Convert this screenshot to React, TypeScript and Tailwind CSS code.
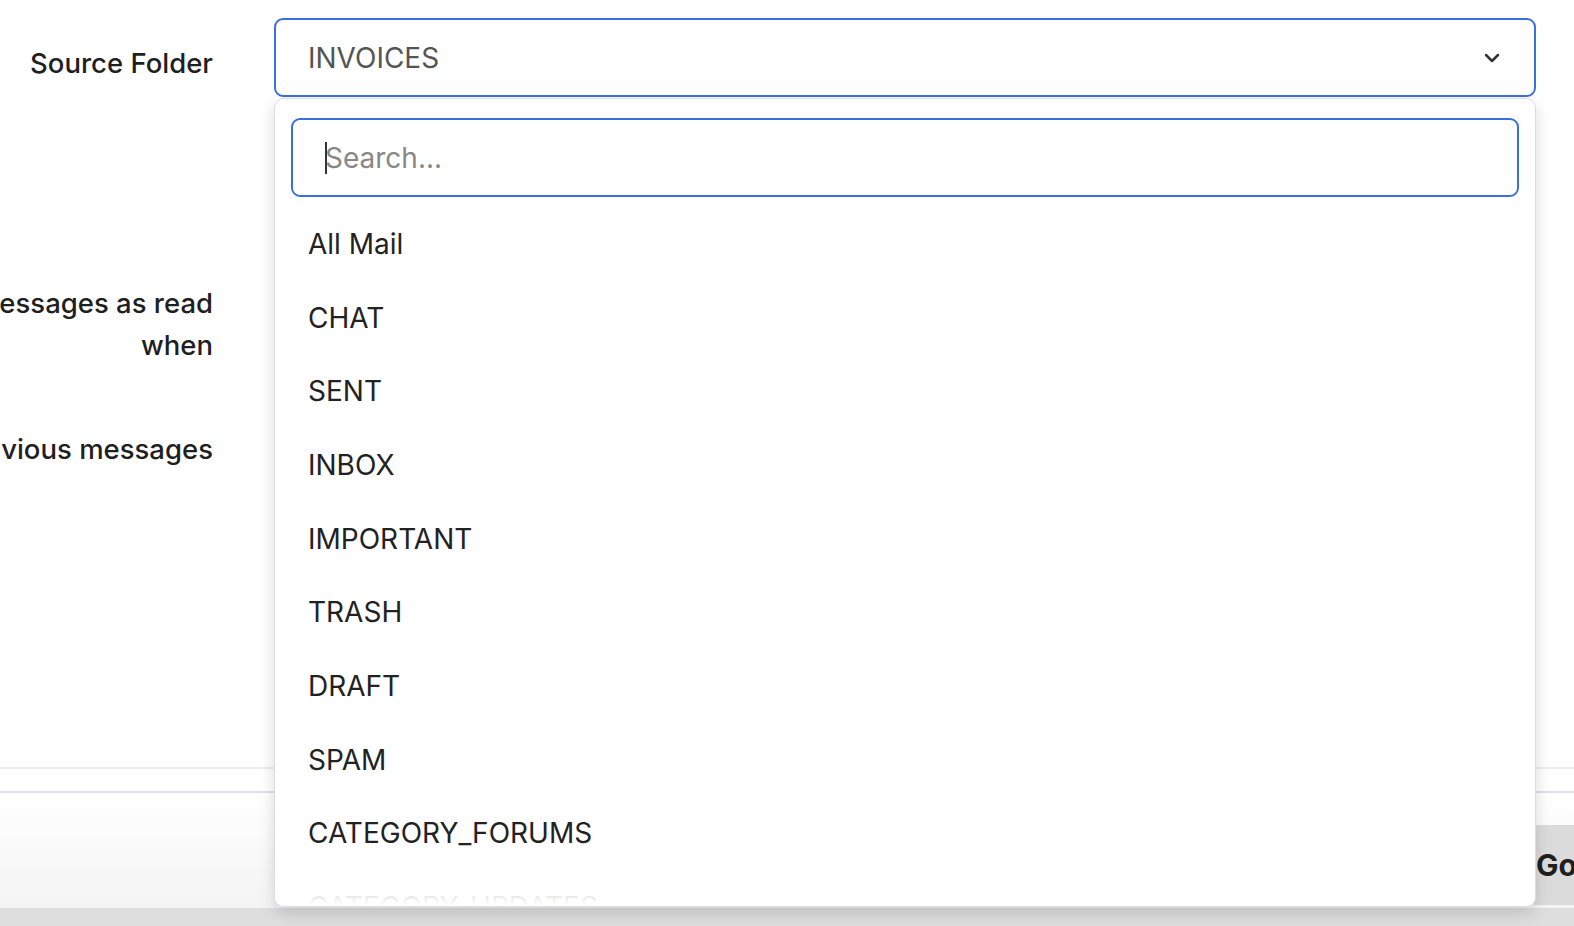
import React from "react";

const items = ["All Mail","CHAT","SENT","INBOX","IMPORTANT","TRASH","DRAFT","SPAM","CATEGORY_FORUMS","CATEGORY_UPDATES"];

export default function App() {
  return (
    <div className="relative w-[1574px] h-[926px] overflow-hidden bg-white text-[#1f1f1f]" style={{fontFamily:"Inter, 'Noto Sans', sans-serif"}}>
      <div className="flex flex-col h-full">
        <div className="flex h-[767px]">
          <div className="w-[213px] shrink-0 flex flex-col items-end text-[27.5px] leading-[42px] font-medium text-right">
            <div className="mt-[42px] whitespace-nowrap">Source Folder</div>
            <div className="mt-[198px] whitespace-nowrap">essages as read</div>
            <div>when</div>
            <div className="mt-[62px] whitespace-nowrap">vious messages</div>
          </div>
        </div>
        <div className="h-[26px] border-t-2 border-[#ececef] border-b-2 border-b-[#e0e0ec]" />
        <div className="flex-1 flex justify-end items-start bg-gradient-to-b from-white to-[#f4f4f4]">
          <div className="mt-[32px] h-[80px] w-[40px] bg-[#dcdbdc] flex items-center text-[30px] font-bold pl-[2px] overflow-hidden whitespace-nowrap">Go</div>
        </div>
        <div className="h-[18px] bg-[#dedede]" />
      </div>

      <div className="absolute left-[274px] top-[18px] w-[1262px] h-[79px] rounded-[9px] border-2 border-[#3b6fe0] bg-white flex items-center justify-between px-[32px] text-[28px] text-[#555]">
        <span>INVOICES</span>
        <svg width="24" height="24" viewBox="0 0 24 24" fill="none" stroke="#333" strokeWidth="2.5" strokeLinecap="round" strokeLinejoin="round" className="mr-[-2px]"><path d="M6 9l6 6 6-6"/></svg>
      </div>

      <div className="absolute left-[274px] top-[98px] w-[1262px] h-[809px] rounded-[10px] border border-[#dcdce6] bg-white shadow-[0_6px_16px_rgba(0,0,0,0.15)] overflow-hidden">
        <div className="px-[16px] pt-[19px]">
          <div className="h-[79px] rounded-[9px] border-2 border-[#3b6fe0] flex items-center px-[32px] text-[28px] text-[#888]">
            <span className="w-[2px] h-[32px] bg-[#333] mr-[-2px]" />Search...
          </div>
        </div>
        <div className="pt-[10px]">
          {items.map((t) => (
            <div key={t} className="h-[73.7px] flex items-center px-[33px] text-[28px] text-[#222] whitespace-nowrap">{t}</div>
          ))}
        </div>
        <div className="absolute left-0 right-0 bottom-0 h-[30px] bg-gradient-to-b from-white/70 to-white" />
      </div>
    </div>
  );
}
